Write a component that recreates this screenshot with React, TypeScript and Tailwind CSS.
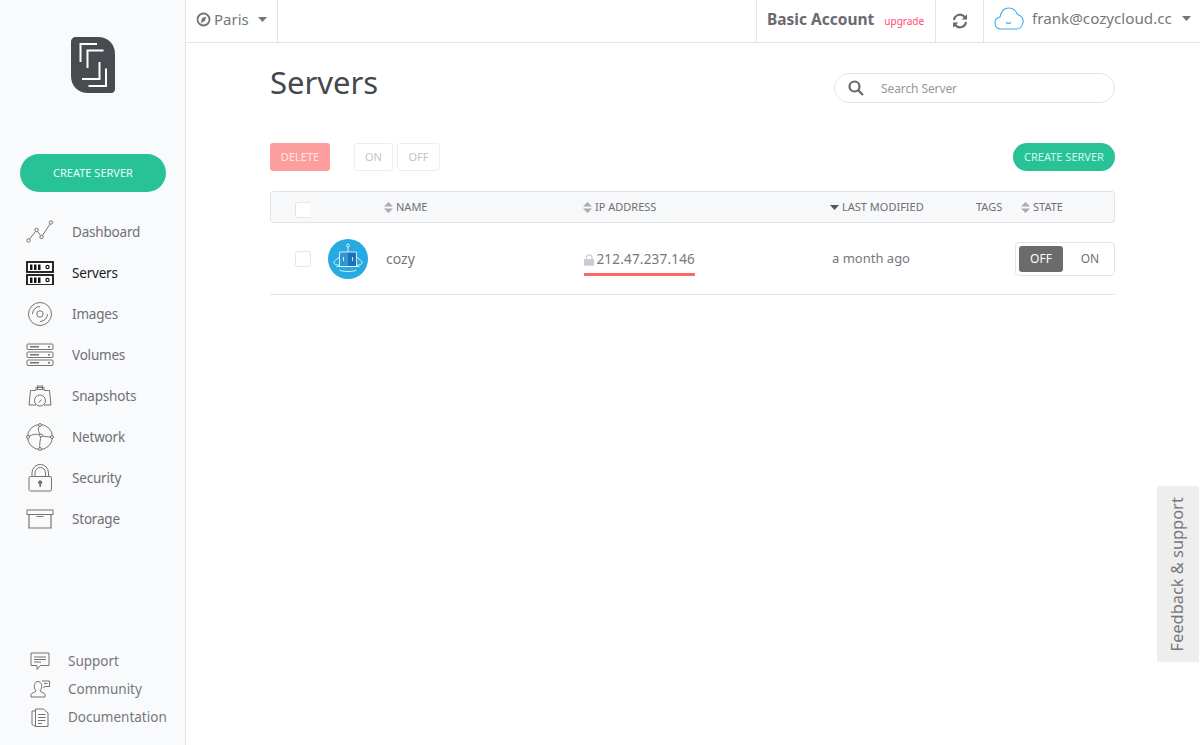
import type { ReactNode } from "react";

const font = "font-['Noto_Sans','Open_Sans',sans-serif]";

function Caret({ className = "" }: { className?: string }) {
	return (
		<svg width="9" height="5" viewBox="0 0 9 5" className={className}>
			<path d="M0 0h9L4.5 5z" fill="currentColor" />
		</svg>
	);
}

function SortIcon() {
	return (
		<svg width="9" height="11" viewBox="0 0 9 11" className="text-[#a9abae]">
			<path d="M4.5 0L9 4.5H0zM0 6.5h9L4.5 11z" fill="currentColor" />
		</svg>
	);
}

const stroke = {
	fill: "none",
	stroke: "#77736f",
	strokeWidth: 1,
};

function DashboardIcon() {
	return (
		<svg width="28" height="24" viewBox="0 0 28 24" {...stroke}>
			<circle cx="2.5" cy="20.5" r="1.7" />
			<circle cx="10.5" cy="10" r="1.7" />
			<circle cx="15.5" cy="17" r="1.7" />
			<circle cx="25" cy="2.5" r="1.7" />
			<path d="M3.5 19L9.5 11.5M11.5 11.5L14.5 15.5M16.5 15.5L24 4" />
		</svg>
	);
}

function ServersIcon() {
	return (
		<svg width="28" height="24" viewBox="0 0 28 24">
			<rect x="1" y="1" width="26" height="10" fill="#fff" stroke="#111" strokeWidth="1.8" />
			<rect x="1" y="14" width="26" height="10" fill="#fff" stroke="#111" strokeWidth="1.8" />
			<path d="M4 3.5h2.500v5.500H4zM8 3.500h2.500v5.500H8zM12 3.500h2.500v5.500H12zM4 16.500h2.500v5.500H4zM8 16.500h2.500v5.500H8zM12 16.500h2.500v5.500H12z" fill="#111" />
			<circle cx="21.500" cy="6" r="1.600" fill="none" stroke="#111" strokeWidth="1.200" />
			<circle cx="21.500" cy="19" r="1.600" fill="none" stroke="#111" strokeWidth="1.200" />
		</svg>
	);
}

function ImagesIcon() {
	return (
		<svg width="28" height="26" viewBox="0 0 28 26" {...stroke}>
			<circle cx="14" cy="13" r="11.5" />
			<circle cx="14" cy="13" r="3.2" />
			<path d="M14 5.5a7.5 7.5 0 0 0-7.5 7.5M14 20.5a7.5 7.5 0 0 0 7.5-7.5" />
		</svg>
	);
}

function VolumesIcon() {
	return (
		<svg width="28" height="24" viewBox="0 0 28 24" {...stroke}>
			<rect x="1" y="1" width="26" height="5.5" rx="1" />
			<rect x="1" y="9" width="26" height="5.5" rx="1" />
			<rect x="1" y="17" width="26" height="5.5" rx="1" />
			<path d="M4 3.8h9M4 11.8h9M4 19.8h9M22 3.8h2M22 11.8h2M22 19.8h2" strokeWidth="1.5" />
		</svg>
	);
}

function SnapshotsIcon() {
	return (
		<svg width="24" height="22" viewBox="0 0 24 22" {...stroke}>
			<path d="M2.500 5.500h5.500V2.500h8v3h5.500L23 20h-7M8 20H1L2.500 5.500" />
			<rect x="9.500" y="1" width="5" height="3.500" />
			<circle cx="12" cy="15.500" r="5.500" />
			<path d="M10.500 17.500l3-2.500" />
		</svg>
	);
}

function NetworkIcon() {
	return (
		<svg width="28" height="28" viewBox="0 0 28 28" {...stroke}>
			<circle cx="14" cy="14" r="12.5" />
			<path d="M14 2c-2.500 3.500-2 7 1 10.500-.5 4-2 9-1 13.500M2 14c4-3 9-3.500 13-1.500 3.500 1 7 1.500 11 1.500" />
			<circle cx="14" cy="2" r="1.500" fill="#f9fafc" />
			<circle cx="2" cy="14" r="1.500" fill="#f9fafc" />
			<circle cx="26" cy="14" r="1.500" fill="#f9fafc" />
			<circle cx="14" cy="26" r="1.500" fill="#f9fafc" />
			<circle cx="15" cy="12.500" r="1.500" fill="#f9fafc" />
		</svg>
	);
}

function SecurityIcon() {
	return (
		<svg width="28" height="28" viewBox="0 0 28 28" {...stroke}>
			<rect x="3" y="12.500" width="22.500" height="14.500" rx="1.500" />
			<path d="M6 12.500V9a8.200 8.500 0 0 1 16.500 0v3.500M9 12.500V9a5.200 5.500 0 0 1 10.500 0v3.500" />
			<circle cx="14.200" cy="18.500" r="1.700" fill="#77736f" />
			<path d="M14.200 19v4" strokeWidth="1.600" />
		</svg>
	);
}

function StorageIcon() {
	return (
		<svg width="28" height="20" viewBox="0 0 28 20" {...stroke}>
			<rect x="1" y="1" width="26" height="4.500" />
			<path d="M3 5.500V19h22V5.500M10.500 7.500h7" strokeWidth="1.200" />
		</svg>
	);
}

function SupportIcon() {
	return (
		<svg width="20" height="19" viewBox="0 0 20 19" {...stroke}>
			<path d="M1 1h18v12.500h-8.500L7 17.500v-4H1z" />
			<path d="M4 5h12M4 7.500h12M4 10h7" />
		</svg>
	);
}

function CommunityIcon() {
	return (
		<svg width="20" height="18" viewBox="0 0 20 18" {...stroke}>
			<path d="M1 17v-2.500c0-1.500 4-2 5-3.500-1.500-2-2-4-1.500-6.500C5 2.500 6.500 1.500 8 1.500s3 1 3.500 3c.5 2.500 0 4.500-1.500 6.500 1 1.500 5 2 5 3.500V17z" />
			<path d="M12 1h7.500v5.500H15l-2 1.500" fill="#f9fafc" />
			<path d="M14 3.500h3.500" />
		</svg>
	);
}

function DocumentationIcon() {
	return (
		<svg width="18" height="19" viewBox="0 0 18 19" {...stroke}>
			<path d="M4.500 3H1v13.500l3.500 2" />
			<path d="M4.500 1h8L17 5v13.500H4.500z" />
			<path d="M7 6.500h7.500M7 9.500h7.500M7 12.500h7.500M7 15.500h4" />
		</svg>
	);
}

function Logo() {
	return (
		<svg width="44" height="56" viewBox="0 0 44 56">
			<path d="M5 0h22c10 0 17 7 17 17v35c0 2.500-1.500 4-4 4H17C7 56 0 49 0 39V5C0 2 2 0 5 0z" fill="#484b50" />
			<g fill="none" stroke="#fff" strokeWidth="2">
				<path d="M26 7H9.500v18" />
				<path d="M32.500 13.500H16.500V31" />
				<path d="M28.500 25v17H11" />
				<path d="M35 31.500V49H17.500" />
			</g>
		</svg>
	);
}

function CloudIcon() {
	return (
		<svg width="30" height="23" viewBox="0 0 30 23" fill="none" stroke="#38aef0" strokeWidth="1.100">
			<path d="M7 22C3.500 22 1 19.500 1 16c0-3 2-5.500 5-6C7 4.500 10.500 1 15 1c4 0 7 2.500 8.500 6.500C27 8.500 29.500 11.500 29 15.500 28.500 19 26 22 22.500 22z" />
			<path d="M12 15.500c1.500 1 3.500 1 5 0" />
		</svg>
	);
}

function RobotIcon() {
	return (
		<svg width="40" height="40" viewBox="0 0 40 40">
			<circle cx="20" cy="20" r="20" fill="#27a9e1" />
			<path d="M11.500 13H20v14.500h-8.500z" fill="#2f97d6" />
			<path d="M20 13h8.500v14.500H20z" fill="#1d72b8" />
			<g fill="none" stroke="#fff" strokeWidth="0.800">
				<path d="M11.500 13h17v14.500h-17z" />
				<path d="M20 13V8" />
				<circle cx="20" cy="6.500" r="1.500" />
				<path d="M11.500 18L6.500 22c-1 1-.5 3 1 3.500l4 1M28.500 18l5 4c1 1 .5 3-1 3.500l-4 1" />
				<path d="M8.500 27.500h23M11.500 31c3 2 14 2 17 0" />
				<path d="M15.500 18v4M24.500 18v4" />
			</g>
		</svg>
	);
}

function NavItem({ icon, label, active }: { icon: ReactNode; label: string; active?: boolean }) {
	return (
		<li className="flex h-[41px] items-center">
			<span className="flex w-[28px] justify-center">{icon}</span>
			<span className={`ml-[18px] pt-[2px] text-[13.5px] tracking-[-0.2px] ${active ? "text-[#1b1b1b]" : "text-[#6f6f74]"}`}>
				{label}
			</span>
		</li>
	);
}

function FooterItem({ icon, label }: { icon: ReactNode; label: string }) {
	return (
		<li className="flex h-[28px] items-center">
			<span className="flex w-[20px] justify-center">{icon}</span>
			<span className="ml-[18px] text-[13.5px] text-[#77777b]">{label}</span>
		</li>
	);
}

function Sidebar() {
	return (
		<aside className="flex h-[745px] w-[186px] shrink-0 flex-col border-r border-[#e5e5e5] bg-[#f9fafc]">
			<div className="flex justify-center pt-[37px] pl-[1px]">
				<Logo />
			</div>
			<button className="mt-[61px] mr-[19px] ml-[20px] h-[38px] rounded-full bg-[#27c397] text-[11px] text-[#eafff8]">
				CREATE SERVER
			</button>
			<ul className="mt-[19px] pl-[26px]">
				<NavItem icon={<DashboardIcon />} label="Dashboard" />
				<NavItem icon={<ServersIcon />} label="Servers" active />
				<NavItem icon={<ImagesIcon />} label="Images" />
				<NavItem icon={<VolumesIcon />} label="Volumes" />
				<NavItem icon={<SnapshotsIcon />} label="Snapshots" />
				<NavItem icon={<NetworkIcon />} label="Network" />
				<NavItem icon={<SecurityIcon />} label="Security" />
				<NavItem icon={<StorageIcon />} label="Storage" />
			</ul>
			<ul className="mt-auto pb-[14px] pl-[30px]">
				<FooterItem icon={<SupportIcon />} label="Support" />
				<FooterItem icon={<CommunityIcon />} label="Community" />
				<FooterItem icon={<DocumentationIcon />} label="Documentation" />
			</ul>
		</aside>
	);
}

function Topbar() {
	return (
		<header className="flex h-[43px] items-stretch border-b border-[#e5e5e5] text-[#6f6f74]">
			<div className="flex w-[92px] items-center border-r border-[#e5e5e5] pb-[3px] pl-[10px]">
				<svg width="15" height="15" viewBox="0 0 15 15" fill="none" stroke="#77736f" strokeWidth="1.800">
					<circle cx="7.500" cy="7.500" r="6" />
					<path d="M10 5L8.500 9 5 10.500 6.500 6z" fill="#77736f" strokeWidth="0.500" />
				</svg>
				<span className="ml-[3px] text-[15px] text-[#77777b]">Paris</span>
				<Caret className="ml-[9px] text-[#77736f]" />
			</div>
			<div className="ml-auto flex w-[180px] items-center border-r border-l border-[#e5e5e5] pb-[2px] pl-[10px]">
				<span className="text-[15.500px] font-bold text-[#6a6a6e]">Basic Account</span>
				<span className="ml-[10px] pt-[2px] text-[10px] text-[#ff4b6e]">upgrade</span>
			</div>
			<div className="flex w-[48px] items-center justify-center border-r border-[#e5e5e5]">
				<svg width="16" height="16" viewBox="0 0 16 16" fill="none" stroke="#6b6b6b" strokeWidth="2.200">
					<path d="M2 7a6 6 0 0 1 10.500-3.200L14 5.500" />
					<path d="M14 9a6 6 0 0 1-10.500 3.200L2 10.500" />
					<path d="M15 1.200v5.300H9.700zM1 14.800V9.500h5.300z" fill="#6b6b6b" stroke="none" />
				</svg>
			</div>
			<div className="flex w-[216px] items-center pb-[5px] pl-[10px]">
				<CloudIcon />
				<span className="ml-[8px] text-[15.200px] text-[#77777b]">frank@cozycloud.cc</span>
				<Caret className="ml-[10px] text-[#77736f]" />
			</div>
		</header>
	);
}

function ColumnHead({ label, sort = true, width }: { label: string; sort?: boolean; width: string }) {
	return (
		<div className={`flex items-center gap-[3px] ${width}`}>
			{sort && <SortIcon />}
			<span>{label}</span>
		</div>
	);
}

function Content() {
	return (
		<main className="pr-[85px] pl-[84px]">
			<div className="flex items-start justify-between pt-[19px]">
				<h1 className="h-[42px] text-[31px] leading-[40px] text-[#45484d]">Servers</h1>
				<div className="mt-[11px] flex h-[30px] w-[281px] items-center rounded-full border border-[#e3e3e3] pl-[13px]">
					<svg width="16" height="16" viewBox="0 0 16 16" fill="none" stroke="#68686a" strokeWidth="2.200">
						<circle cx="6.500" cy="6.500" r="5" />
						<path d="M10 10l5 5" />
					</svg>
					<span className="ml-[17px] pt-[2px] text-[12px] tracking-[-0.1px] text-[#97979b]">Search Server</span>
				</div>
			</div>

			<div className="mt-[39px] flex h-[28px] items-center text-[11px]">
				<button className="h-[28px] w-[60px] rounded-[3px] bg-[#fc9e9e] text-[#fde7e7]">DELETE</button>
				<button className="ml-[24px] h-[28px] w-[39px] rounded-[3px] border border-[#eeeeee] text-[#c4c4c4]">ON</button>
				<button className="ml-[4px] h-[28px] w-[43px] rounded-[3px] border border-[#eeeeee] text-[#c4c4c4]">OFF</button>
				<button className="ml-auto h-[28px] w-[102px] rounded-full bg-[#27c397] text-[#d9f7ee]">CREATE SERVER</button>
			</div>

			<div className="mt-[20px] flex h-[32px] items-center rounded-[3px] border border-[#e3e3e3] bg-[#f7f8fa] text-[11px] text-[#6f6f74]">
				<div className="mt-[6px] ml-[24px] h-[16px] w-[15px] rounded-l-[3px] border border-r-0 border-[#e5e5e5] bg-white" />
				<div className="w-[74px]" />
				<ColumnHead label="NAME" width="w-[199px]" />
				<ColumnHead label="IP ADDRESS" width="w-[247px]" />
				<div className="flex w-[146px] items-center gap-[3px]">
					<Caret className="text-[#55555a]" />
					<span>LAST MODIFIED</span>
				</div>
				<ColumnHead label="TAGS" sort={false} width="w-[45px]" />
				<ColumnHead label="STATE" width="w-[60px]" />
			</div>

			<div className="flex h-[72px] items-center border-b border-[#e5e5e5] text-[#77777b]">
				<div className="ml-[25px] h-[16px] w-[16px] rounded-[3px] border border-[#e5e5e5] bg-white" />
				<div className="ml-[17px]">
					<RobotIcon />
				</div>
				<span className="ml-[18px] w-[198px] text-[14px]">cozy</span>
				<div className="mb-[2px] flex h-[36px] w-[111px] items-center justify-center border-b-[3px] border-[#fd6767] pt-[7px]">
					<svg width="11" height="12" viewBox="0 0 11 12" className="mr-[2px]">
						<path d="M1 5h9a1 1 0 0 1 1 1v5a1 1 0 0 1-1 1H1a1 1 0 0 1-1-1V6a1 1 0 0 1 1-1z" fill="#c9cdd3" />
						<path d="M2.500 5V3.500a3 3 0 0 1 6 0V5" fill="none" stroke="#c9cdd3" strokeWidth="1.300" />
					</svg>
					<span className="text-[13.500px] tracking-[0.2px]">212.47.237.146</span>
				</div>
				<span className="ml-[137px] text-[13px]">a month ago</span>
				<div className="ml-auto flex h-[34px] w-[100px] items-center rounded-[4px] border border-[#e5e5e5] pl-[3px] text-[12px]">
					<span className="flex h-[26px] w-[44px] shrink-0 items-center justify-center rounded-[3px] bg-[#6b6b6b] text-white">OFF</span>
					<span className="flex w-[54px] shrink-0 justify-center text-[#6f6f74]">ON</span>
				</div>
			</div>
		</main>
	);
}

export default function App() {
	return (
		<div className={`relative flex h-[745px] w-[1200px] overflow-hidden bg-white ${font}`}>
			<Sidebar />
			<div className="min-w-0 flex-1">
				<Topbar />
				<Content />
			</div>
			<div className="absolute top-[486px] right-[1px] flex h-[176px] w-[42px] items-center justify-center bg-[#eeeeee] pr-[2px]">
				<span className="-rotate-90 text-[16.400px] whitespace-nowrap text-[#77777b]">Feedback &amp; support</span>
			</div>
		</div>
	);
}
